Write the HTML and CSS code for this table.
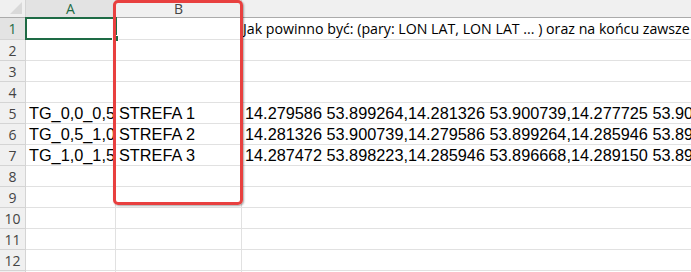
FILE: index.html
```html
<!DOCTYPE html>
<html lang="pl">
<head>
<meta charset="utf-8">
<title>Arkusz</title>
<link rel="stylesheet" href="styles.css">
</head>
<body>
<div class="sheet">
  <div class="grid">
    <div class="hdr corner"><span class="tri"></span></div>
    <div class="hdr col sel">A</div>
    <div class="hdr col">B</div>
    <div class="hdr col last"></div>

    <div class="hdr row sel">1</div>
    <div class="cell"></div>
    <div class="cell"></div>
    <div class="cell c note">Jak powinno być: (pary: LON LAT, LON LAT ... ) oraz na końcu zawsze pierwsza para</div>

    <div class="hdr row">2</div><div class="cell"></div><div class="cell"></div><div class="cell c"></div>
    <div class="hdr row">3</div><div class="cell"></div><div class="cell"></div><div class="cell c"></div>
    <div class="hdr row">4</div><div class="cell"></div><div class="cell"></div><div class="cell c"></div>

    <div class="hdr row">5</div>
    <div class="cell data">TG_0,0_0,5</div>
    <div class="cell data">STREFA 1</div>
    <div class="cell c data">14.279586 53.899264,14.281326 53.900739,14.277725 53.902061</div>

    <div class="hdr row">6</div>
    <div class="cell data">TG_0,5_1,0</div>
    <div class="cell data">STREFA 2</div>
    <div class="cell c data">14.281326 53.900739,14.279586 53.899264,14.285946 53.896668</div>

    <div class="hdr row">7</div>
    <div class="cell data">TG_1,0_1,5</div>
    <div class="cell data">STREFA 3</div>
    <div class="cell c data">14.287472 53.898223,14.285946 53.896668,14.289150 53.895120</div>

    <div class="hdr row">8</div><div class="cell"></div><div class="cell"></div><div class="cell c"></div>
    <div class="hdr row">9</div><div class="cell"></div><div class="cell"></div><div class="cell c"></div>
    <div class="hdr row">10</div><div class="cell"></div><div class="cell"></div><div class="cell c"></div>
    <div class="hdr row">11</div><div class="cell"></div><div class="cell"></div><div class="cell c"></div>
    <div class="hdr row">12</div><div class="cell"></div><div class="cell"></div><div class="cell c"></div>
    <div class="hdr row">13</div><div class="cell"></div><div class="cell"></div><div class="cell c"></div>
  </div>
  <div class="selection"><span class="handle"></span></div>
  <div class="highlight"></div>
</div>
</body>
</html>
```

FILE: styles.css
```css
html, body {
  margin: 0;
  padding: 0;
  overflow: hidden;
  background: #ffffff;
}

.sheet {
  position: relative;
  width: 691px;
  height: 272px;
  overflow: hidden;
}

.grid {
  display: grid;
  grid-template-columns: 26px 90px 126px 600px;
  grid-template-rows: 18px 22px repeat(12, 21px);
}

.hdr {
  background: #f0f0f0;
  border-right: 1px solid #d4d4d4;
  border-bottom: 1px solid #d4d4d4;
  box-sizing: border-box;
  color: #444444;
  font-family: "Open Sans", "Noto Sans", sans-serif;
  font-size: 14px;
  display: flex;
  align-items: center;
  justify-content: center;
}

.hdr.col {
  border-bottom: 1px solid #ababab;
  line-height: 17px;
}

.hdr.col.last {
  border-right: none;
}

.hdr.row {
  line-height: 20px;
  padding-top: 1px;
}

.hdr.sel {
  background: #e3e3e3;
  color: #1e6b45;
}

.corner {
  border-bottom: 1px solid #ababab;
  position: relative;
  justify-content: flex-end;
  align-items: flex-end;
  padding: 0 3px 3px 0;
}

.tri {
  width: 0;
  height: 0;
  border-left: 12px solid transparent;
  border-bottom: 12px solid #d9d9d9;
}

.cell {
  border-right: 1px solid #e1e1e1;
  border-bottom: 1px solid #e1e1e1;
  box-sizing: border-box;
  font-family: "Liberation Sans", Arial, sans-serif;
  font-size: 16.3px;
  color: #000000;
  white-space: nowrap;
  overflow: hidden;
  padding: 0 0 0 3px;
  display: flex;
  align-items: flex-end;
  line-height: 19px;
}

.cell.c {
  border-right: none;
  overflow: visible;
}

.cell.data {
  padding-left: 3px;
}

.cell.note {
  font-family: "Open Sans", "Noto Sans", sans-serif;
  font-size: 14.2px;
  padding-left: 1px;
  line-height: 20px;
}

.selection {
  position: absolute;
  left: 25px;
  top: 17px;
  width: 92px;
  height: 23px;
  border: 2px solid #1e6b45;
  box-sizing: border-box;
}

.handle {
  position: absolute;
  right: -4px;
  bottom: -4px;
  width: 5px;
  height: 5px;
  background: #1e6b45;
  border: 1px solid #ffffff;
}

.highlight {
  position: absolute;
  left: 113px;
  top: 0;
  width: 130px;
  height: 205px;
  border: 3.5px solid #e8403f;
  border-radius: 5px;
  box-sizing: border-box;
  box-shadow: 1px 1px 2px rgba(0, 0, 0, 0.35);
}
```
